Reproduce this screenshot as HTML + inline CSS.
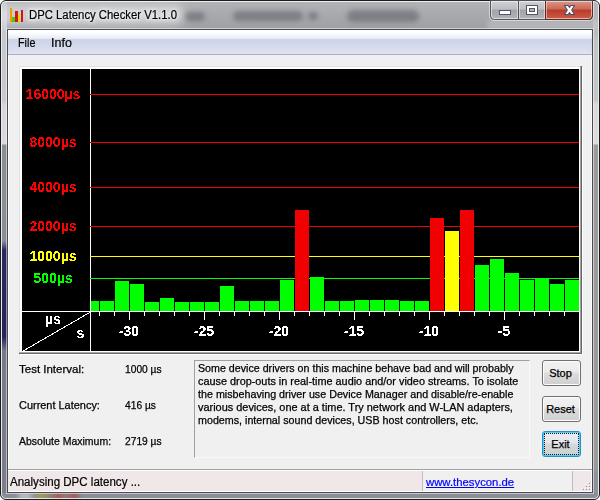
<!DOCTYPE html>
<html>
<head>
<meta charset="utf-8">
<title>DPC Latency Checker V1.1.0</title>
<style>
*{margin:0;padding:0;box-sizing:border-box;}
html,body{width:600px;height:500px;overflow:hidden;background:#fff;}
body{position:relative;font-family:"Liberation Sans",sans-serif;color:#000;}
.abs{position:absolute;}
#win{position:absolute;left:0;top:0;width:600px;height:500px;border-radius:6px;background:linear-gradient(to bottom,#b2b4b7 0,#a7a9ad 14px,#9ea0a5 28px,#9ea0a5 100%);overflow:hidden;border:1px solid #1c1c1c;}
#win .glass{position:absolute;left:0;top:0;width:598px;height:498px;border-radius:5px;border:1px solid rgba(255,255,255,.78);}
#lb{position:absolute;left:1px;top:1px;width:5px;height:497px;background:linear-gradient(to bottom,#bfc1c6 0,#c6c8ce 28px,#c8cad0 98px,#d6d8de 104px,#d8dae0 142px,#8a8e96 143px,#898d96 239px,#2a2a5e 248px,#24245a 335px,#777a88 349px,#7c7f8a 497px);}
#rb{position:absolute;left:592px;top:1px;width:5px;height:497px;background:linear-gradient(to bottom,#b4b6ba 0,#b6b8bc 28px,#c2c4c6 40px,#c4c6c8 98px,#dadada 102px,#dcdcdc 142px,#9b9b9c 143px,#9a9a9a 466px,#8f919b 472px,#8f919b 497px);}
#bb{position:absolute;left:1px;top:492px;width:596px;height:6px;background:#8b8e98;}
#client{position:absolute;left:7px;top:29px;width:586px;height:464px;background:#f0f0f0;border:1px solid #4a4a52;box-shadow:0 0 0 1px rgba(255,255,255,.5);}
#client .in{position:absolute;left:0;top:0;width:584px;height:462px;border:1px solid #fff;}
#title{position:absolute;left:29px;top:7px;-webkit-text-stroke:.2px #000;transform:scaleX(.906);transform-origin:0 0;font-size:12.5px;line-height:16px;white-space:nowrap;color:#000;text-shadow:0 0 6px #fff,0 0 9px #fff,0 0 4px #fff;}
#menu{position:absolute;left:8px;top:30px;width:584px;height:25px;background:linear-gradient(to bottom,#ffffff 0,#ffffff 2px,#f4f7fc 5px,#e6e9f4 9px,#cfd5e7 9px,#d1d7ec 14px,#d9deee 20px,#e1e2f1 24px,#aab1c6 24px,#aab1c6 25px);}
#menu span{position:absolute;top:6px;font-size:12px;line-height:15px;-webkit-text-stroke:.2px #000;}
.blob{position:absolute;border-radius:6px;background:rgba(70,72,78,.43);filter:blur(2.5px);}
.lbl{position:absolute;font-size:11px;line-height:13px;white-space:nowrap;-webkit-text-stroke:.25px #000;}
.btn{position:absolute;left:542px;width:39px;height:26px;border:1px solid #707070;border-radius:3px;background:linear-gradient(to bottom,#f2f2f2 0,#ebebeb 11px,#dddddd 12px,#cfcfcf 24px);box-shadow:inset 0 0 0 1px #fcfcfc;font-size:11px;line-height:25px;text-align:center;text-indent:-2px;-webkit-text-stroke:.25px #000;}
</style>
</head>
<body>
<div id="win">
  <div id="lb"></div><div id="rb"></div><div id="bb"></div>
  <div class="blob" style="left:-6px;top:3px;width:190px;height:22px;border-radius:11px;background:rgba(255,255,255,.42);filter:blur(5px);"></div>
  <div class="blob" style="left:486px;top:19px;width:112px;height:10px;border-radius:4px;background:rgba(255,255,255,.2);filter:blur(2px);"></div>
  <div class="blob" style="left:184px;top:11px;width:20px;height:9px;"></div>
  <div class="blob" style="left:232px;top:10px;width:70px;height:10px;"></div>
  <div class="blob" style="left:307px;top:11px;width:10px;height:8px;"></div>
  <div class="blob" style="left:346px;top:9px;width:72px;height:12px;"></div>
  <div class="blob" style="left:17px;top:492px;width:14px;height:6px;background:rgba(235,235,240,.6);"></div>
  <div class="blob" style="left:35px;top:492px;width:12px;height:6px;background:rgba(190,160,40,.7);"></div>
  <div class="blob" style="left:46px;top:492px;width:30px;height:6px;background:rgba(150,110,70,.5);"></div>
  <div class="blob" style="left:53px;top:492px;width:9px;height:6px;background:rgba(190,60,60,.7);"></div>
  <div class="blob" style="left:68px;top:492px;width:10px;height:6px;background:rgba(190,60,60,.7);"></div>
  <div class="glass"></div>
</div>

<!-- title bar -->
<svg class="abs" style="left:9px;top:7px" width="16" height="16" viewBox="0 0 16 16" shape-rendering="crispEdges">
  <rect x="1" y="1" width="2" height="14" fill="#f59a00"/>
  <rect x="3" y="10" width="3" height="5" fill="#3fcf10"/>
  <rect x="6" y="4" width="3" height="11" fill="#d01818"/>
  <rect x="9" y="7" width="2" height="8" fill="#ecd500"/>
  <rect x="12" y="3" width="2" height="12" fill="#d81010"/>
</svg>
<div id="title">DPC Latency Checker V1.1.0</div>

<!-- caption buttons -->
<svg class="abs" style="left:489px;top:0" width="105" height="21" viewBox="0 0 105 21">
  <defs>
    <linearGradient id="gb" x1="0" y1="0" x2="0" y2="1"><stop offset="0" stop-color="#d0d2d5"/><stop offset=".45" stop-color="#bcbec2"/><stop offset=".5" stop-color="#a1a4a9"/><stop offset="1" stop-color="#b0b3b8"/></linearGradient>
    <linearGradient id="gr" x1="0" y1="0" x2="0" y2="1"><stop offset="0" stop-color="#dd9686"/><stop offset=".45" stop-color="#cb6856"/><stop offset=".5" stop-color="#b93c29"/><stop offset="1" stop-color="#cc5c45"/></linearGradient>
  </defs>
  <path d="M0.5 1 V15.5 Q0.5 20.5 5.5 20.5 H99.5 Q104.5 20.5 104.5 15.5 V1" fill="none" stroke="rgba(255,255,255,.5)" stroke-width="1"/>
  <path d="M1.5 0.5 H103.5 V15.5 Q103.5 19.5 99.5 19.5 H5.5 Q1.5 19.5 1.5 15.5 Z" fill="url(#gb)" stroke="#4f5258" stroke-width="1"/>
  <path d="M56.5 1 H103 V15.5 Q103 19 99.5 19 H56.5 Z" fill="url(#gr)"/>
  <path d="M2.5 1.5 H102.5 V15.5 Q102.5 18.5 99.5 18.5 H5.5 Q2.5 18.5 2.5 15.5 Z" fill="none" stroke="rgba(255,255,255,.55)" stroke-width="1"/>
  <path d="M29.5 1 V19" stroke="#4f5258" stroke-width="1"/>
  <path d="M56.5 1 V19.5 H99.5 Q103.5 19.5 103.5 15.5 V1" fill="none" stroke="#5c2a28" stroke-width="1"/>
  <path d="M30.5 2 V18 M28.5 2 V18 M55.5 2 V18 M57.5 2 V18" stroke="rgba(255,255,255,.45)" stroke-width="1"/>
  <!-- min -->
  <rect x="10.5" y="10.5" width="11" height="4" fill="#fff" stroke="#535666" stroke-width="1"/>
  <!-- max -->
  <rect x="37.5" y="5.5" width="11" height="9" fill="#fff" stroke="#535666" stroke-width="1"/>
  <rect x="40.5" y="8.5" width="5" height="3" fill="#b0b4bb" stroke="#535666" stroke-width="1"/>
  <!-- close -->
  <path d="M75.5 5.5 H79.2 L80.5 7.4 L81.8 5.5 H85.5 L82.7 10 L85.5 14.5 H81.8 L80.5 12.6 L79.2 14.5 H75.5 L78.3 10 Z" fill="#fff" stroke="#4b4f66" stroke-width="1.1" stroke-linejoin="round"/>
</svg>

<!-- client -->
<div id="client"><div class="in"></div></div>
<div id="menu"><span style="left:10px;transform:scaleX(.9);transform-origin:0 0">File</span><span style="left:43px;transform:scaleX(1.04);transform-origin:0 0">Info</span></div>

<!-- chart frame -->
<div class="abs" style="left:19px;top:66px;width:564px;height:289px;background:#fff;border-left:1px solid #e3e3e3;border-top:1px solid #e3e3e3;"></div>
<div class="abs" style="left:19px;top:352px;width:563px;height:1px;background:#a6a6a6;"></div><div class="abs" style="left:19px;top:353px;width:563px;height:1px;background:#6a6a6a;"></div>
<div class="abs" style="left:580px;top:66px;width:1px;height:287px;background:#a0a0a0;"></div><div class="abs" style="left:581px;top:66px;width:1px;height:288px;background:#666;"></div>
<svg class="abs" id="chart" style="left:22px;top:69px" width="557" height="282" viewBox="22 69 557 282">
  <rect x="22" y="69" width="557" height="282" fill="#000"/>
  <g shape-rendering="crispEdges">
    <rect x="90" y="69" width="1" height="282" fill="#fff"/>
    <rect x="90" y="94" width="489" height="1" fill="#f00000"/>
    <rect x="90" y="142" width="489" height="1" fill="#f00000"/>
    <rect x="90" y="187" width="489" height="1" fill="#f00000"/>
    <rect x="90" y="226" width="489" height="1" fill="#f00000"/>
    <rect x="90" y="256" width="489" height="1" fill="#ffff00"/>
    <rect x="90" y="278" width="489" height="1" fill="#00ff00"/>
    <g id="bars">
      <rect x="91" y="301" width="8" height="10" fill="#00ff00"/>
      <rect x="100" y="301" width="14" height="10" fill="#00ff00"/>
      <rect x="115" y="281" width="14" height="30" fill="#00ff00"/>
      <rect x="130" y="284" width="14" height="27" fill="#00ff00"/>
      <rect x="145" y="302" width="14" height="9" fill="#00ff00"/>
      <rect x="160" y="298" width="14" height="13" fill="#00ff00"/>
      <rect x="175" y="302" width="14" height="9" fill="#00ff00"/>
      <rect x="190" y="302" width="14" height="9" fill="#00ff00"/>
      <rect x="205" y="302" width="14" height="9" fill="#00ff00"/>
      <rect x="220" y="286" width="14" height="25" fill="#00ff00"/>
      <rect x="235" y="301" width="14" height="10" fill="#00ff00"/>
      <rect x="250" y="301" width="14" height="10" fill="#00ff00"/>
      <rect x="265" y="301" width="14" height="10" fill="#00ff00"/>
      <rect x="280" y="280" width="14" height="31" fill="#00ff00"/>
      <rect x="295" y="210" width="14" height="101" fill="#f00000"/>
      <rect x="310" y="277" width="14" height="34" fill="#00ff00"/>
      <rect x="325" y="301" width="14" height="10" fill="#00ff00"/>
      <rect x="340" y="301" width="14" height="10" fill="#00ff00"/>
      <rect x="355" y="300" width="14" height="11" fill="#00ff00"/>
      <rect x="370" y="300" width="14" height="11" fill="#00ff00"/>
      <rect x="385" y="300" width="14" height="11" fill="#00ff00"/>
      <rect x="400" y="301" width="14" height="10" fill="#00ff00"/>
      <rect x="415" y="301" width="14" height="10" fill="#00ff00"/>
      <rect x="430" y="218" width="14" height="93" fill="#f00000"/>
      <rect x="445" y="231" width="14" height="80" fill="#ffff00"/>
      <rect x="460" y="210" width="14" height="101" fill="#f00000"/>
      <rect x="475" y="265" width="14" height="46" fill="#00ff00"/>
      <rect x="490" y="259" width="14" height="52" fill="#00ff00"/>
      <rect x="505" y="273" width="14" height="38" fill="#00ff00"/>
      <rect x="520" y="280" width="14" height="31" fill="#00ff00"/>
      <rect x="535" y="278" width="14" height="33" fill="#00ff00"/>
      <rect x="550" y="284" width="14" height="27" fill="#00ff00"/>
      <rect x="565" y="280" width="14" height="31" fill="#00ff00"/>
    </g>
    <rect x="22" y="311" width="557" height="1" fill="#fff"/>
    <g id="ticks" fill="#fff">
      <rect x="99" y="312" width="1" height="4"/>
      <rect x="114" y="312" width="1" height="4"/>
      <rect x="129" y="312" width="1" height="8"/>
      <rect x="144" y="312" width="1" height="4"/>
      <rect x="159" y="312" width="1" height="4"/>
      <rect x="174" y="312" width="1" height="4"/>
      <rect x="189" y="312" width="1" height="4"/>
      <rect x="204" y="312" width="1" height="8"/>
      <rect x="219" y="312" width="1" height="4"/>
      <rect x="234" y="312" width="1" height="4"/>
      <rect x="249" y="312" width="1" height="4"/>
      <rect x="264" y="312" width="1" height="4"/>
      <rect x="279" y="312" width="1" height="8"/>
      <rect x="294" y="312" width="1" height="4"/>
      <rect x="309" y="312" width="1" height="4"/>
      <rect x="324" y="312" width="1" height="4"/>
      <rect x="339" y="312" width="1" height="4"/>
      <rect x="354" y="312" width="1" height="8"/>
      <rect x="369" y="312" width="1" height="4"/>
      <rect x="384" y="312" width="1" height="4"/>
      <rect x="399" y="312" width="1" height="4"/>
      <rect x="414" y="312" width="1" height="4"/>
      <rect x="429" y="312" width="1" height="8"/>
      <rect x="444" y="312" width="1" height="4"/>
      <rect x="459" y="312" width="1" height="4"/>
      <rect x="474" y="312" width="1" height="4"/>
      <rect x="489" y="312" width="1" height="4"/>
      <rect x="504" y="312" width="1" height="8"/>
      <rect x="519" y="312" width="1" height="4"/>
      <rect x="534" y="312" width="1" height="4"/>
      <rect x="549" y="312" width="1" height="4"/>
      <rect x="564" y="312" width="1" height="4"/>
    </g>
  </g>
  <line x1="22.5" y1="351.3" x2="90" y2="312.3" stroke="#fff" stroke-width="1" shape-rendering="crispEdges"/>
  <defs><filter id="al" x="0" y="0" width="100%" height="100%" color-interpolation-filters="sRGB"><feComponentTransfer><feFuncA type="discrete" tableValues="0 0 1 1"/></feComponentTransfer></filter></defs>
  <g font-family="Liberation Sans, sans-serif" font-weight="bold" font-size="14" text-anchor="middle" filter="url(#al)">
    <text x="53" y="99" fill="#ff0000">16000µs</text>
    <text x="53" y="147" fill="#ff0000">8000µs</text>
    <text x="53" y="192" fill="#ff0000">4000µs</text>
    <text x="53" y="231" fill="#ff0000">2000µs</text>
    <text x="53" y="261" fill="#ffff00">1000µs</text>
    <text x="53" y="283" fill="#00ff00">500µs</text>
    <text x="53" y="324" fill="#fff">µs</text>
    <text x="80.3" y="338" fill="#fff">s</text>
    <text x="129" y="336" fill="#fff">-30</text>
    <text x="204" y="336" fill="#fff">-25</text>
    <text x="279" y="336" fill="#fff">-20</text>
    <text x="354" y="336" fill="#fff">-15</text>
    <text x="429" y="336" fill="#fff">-10</text>
    <text x="504" y="336" fill="#fff">-5</text>
  </g>
</svg>

<!-- bottom panel -->
<div class="lbl" style="left:18.5px;top:363px;transform:scaleX(1.045);transform-origin:0 0">Test Interval:</div>
<div class="lbl" style="left:18.5px;top:399px;transform:scaleX(.995);transform-origin:0 0">Current Latency:</div>
<div class="lbl" style="left:18.5px;top:435px;transform:scaleX(.953);transform-origin:0 0">Absolute Maximum:</div>
<div class="lbl" style="left:124.5px;top:363px;transform:scaleX(.93);transform-origin:0 0">1000 µs</div>
<div class="lbl" style="left:124.5px;top:399px;transform:scaleX(.93);transform-origin:0 0">416 µs</div>
<div class="lbl" style="left:124.5px;top:435px;transform:scaleX(.93);transform-origin:0 0">2719 µs</div>

<div class="abs" style="left:194px;top:360px;width:336px;height:98px;border:1px solid #a0a0a0;border-right-color:#f9f9f9;border-bottom-color:#f9f9f9;"></div>
<div class="lbl tb" style="left:197.5px;top:362px;transform:scaleX(0.97);transform-origin:0 0">Some device drivers on this machine behave bad and will probably</div>
<div class="lbl tb" style="left:197.5px;top:375px;transform:scaleX(0.987);transform-origin:0 0">cause drop-outs in real-time audio and/or video streams. To isolate</div>
<div class="lbl tb" style="left:197.5px;top:388px;transform:scaleX(0.975);transform-origin:0 0">the misbehaving driver use Device Manager and disable/re-enable</div>
<div class="lbl tb" style="left:197.5px;top:401px;transform:scaleX(0.993);transform-origin:0 0">various devices, one at a time. Try network and W-LAN adapters,</div>
<div class="lbl tb" style="left:197.5px;top:414px;transform:scaleX(0.974);transform-origin:0 0">modems, internal sound devices, USB host controllers, etc.</div>

<div class="btn" style="top:360px">Stop</div>
<div class="btn" style="top:396px">Reset</div>
<div class="btn" style="top:431px;border-color:#2f8ccc;box-shadow:inset 0 0 0 1px #46d2fa;background:linear-gradient(to bottom,#ececf2 0,#e4e4ea 11px,#d6d8da 12px,#cbcfcf 24px);">Exit<div class="abs" style="left:1px;top:1px;width:35px;height:22px;border:1px dotted #1a1010;"></div></div>

<!-- status bar -->
<div class="abs" style="left:8px;top:469px;width:584px;height:1px;background:#a0a0a0;"></div>
<div class="abs" style="left:8px;top:470px;width:584px;height:1px;background:#fff;"></div>
<div class="abs" style="left:8px;top:471px;width:414px;height:20px;background:#f0e8e8;"></div>
<div class="abs" style="left:422px;top:471px;width:1px;height:20px;background:#c0bcbc;"></div>
<div class="abs" style="left:572px;top:471px;width:1px;height:20px;background:#c0bcbc;"></div>
<div class="abs" style="left:573px;top:471px;width:18px;height:20px;background:#f0e8e8;"></div>
<svg class="abs" style="left:581px;top:481px" width="10" height="10" viewBox="581 481 10 10" shape-rendering="crispEdges">
  <g fill="#fff"><rect x="588" y="482" width="1" height="1"/><rect x="585" y="485" width="1" height="1"/><rect x="588" y="485" width="1" height="1"/><rect x="582" y="488" width="1" height="1"/><rect x="585" y="488" width="1" height="1"/><rect x="588" y="488" width="1" height="1"/></g>
  <g fill="#a19d9d"><rect x="589" y="483" width="1" height="1"/><rect x="586" y="486" width="1" height="1"/><rect x="589" y="486" width="1" height="1"/><rect x="583" y="489" width="1" height="1"/><rect x="586" y="489" width="1" height="1"/><rect x="589" y="489" width="1" height="1"/></g>
  <g fill="#d6d0d0"><rect x="589" y="482" width="1" height="1"/><rect x="588" y="483" width="1" height="1"/><rect x="586" y="485" width="1" height="1"/><rect x="585" y="486" width="1" height="1"/><rect x="589" y="485" width="1" height="1"/><rect x="588" y="486" width="1" height="1"/><rect x="583" y="488" width="1" height="1"/><rect x="582" y="489" width="1" height="1"/><rect x="586" y="488" width="1" height="1"/><rect x="585" y="489" width="1" height="1"/><rect x="589" y="488" width="1" height="1"/><rect x="588" y="489" width="1" height="1"/></g>
</svg>
<div class="abs" style="left:10px;top:475px;font-size:12px;line-height:15px;white-space:nowrap;transform:scaleX(.962);transform-origin:0 0;-webkit-text-stroke:.2px #000">Analysing DPC latency ...</div>
<div class="abs" style="left:425.5px;top:476px;font-size:11px;line-height:13px;white-space:nowrap;color:#0000ff;text-decoration:underline;transform:scaleX(1.03);-webkit-text-stroke:.2px #0000ff;transform-origin:0 0">www.thesycon.de</div>

</body>
</html>
